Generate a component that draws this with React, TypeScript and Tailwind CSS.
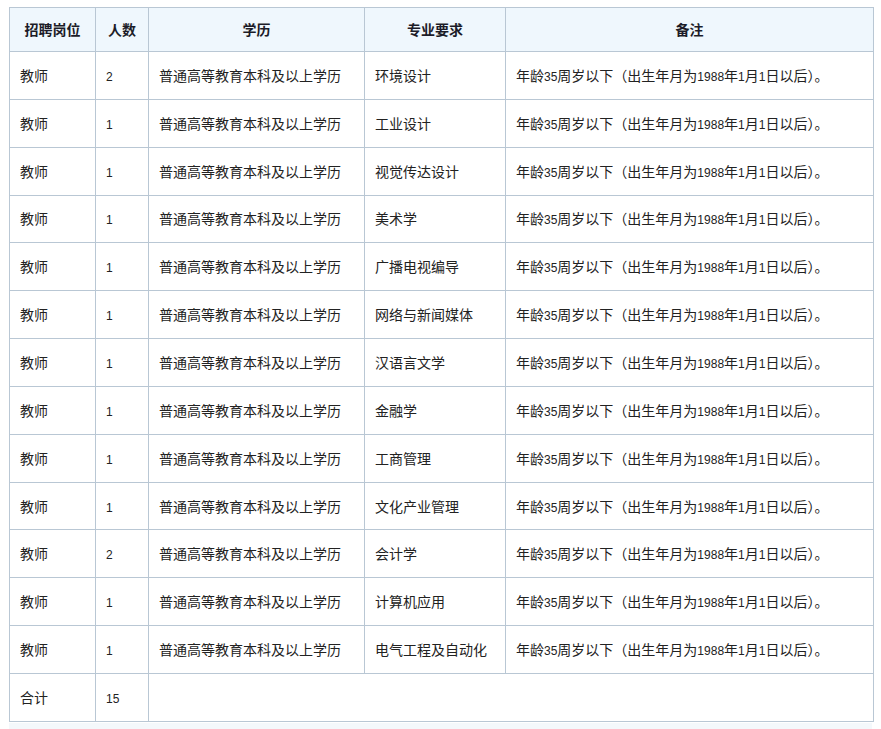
const majors: [number, string][] = [
  [2, "环境设计"],
  [1, "工业设计"],
  [1, "视觉传达设计"],
  [1, "美术学"],
  [1, "广播电视编导"],
  [1, "网络与新闻媒体"],
  [1, "汉语言文学"],
  [1, "金融学"],
  [1, "工商管理"],
  [1, "文化产业管理"],
  [2, "会计学"],
  [1, "计算机应用"],
  [1, "电气工程及自动化"],
]

const cell = "border border-[#b9c7d4] px-[10px] align-middle"

function Num({ children }: { children: React.ReactNode }) {
  return <span className="font-['Liberation_Sans',sans-serif] text-[12px]">{children}</span>
}

export default function App() {
  return (
    <div className="min-h-[729px] bg-white pl-[9px] pt-[7px] font-['Noto_Sans_CJK_SC',sans-serif] text-[14px] text-[#222]">
      <table className="w-[864px] table-fixed border-collapse">
        <colgroup>
          <col className="w-[86px]" />
          <col className="w-[53px]" />
          <col className="w-[216px]" />
          <col className="w-[141px]" />
          <col className="w-[368px]" />
        </colgroup>
        <thead>
          <tr className="h-[44px] bg-[#eff7fd] font-bold text-[#1c1c28]">
            <th className={cell + " text-center"}>招聘岗位</th>
            <th className={cell + " text-center"}>人数</th>
            <th className={cell + " text-center"}>学历</th>
            <th className={cell + " text-center"}>专业要求</th>
            <th className={cell + " text-center"}>备注</th>
          </tr>
        </thead>
        <tbody>
          {majors.map(([n, m], i) => (
            <tr key={i} className="h-[47.85px]">
              <td className={cell}>教师</td>
              <td className={cell}>
                <Num>{n}</Num>
              </td>
              <td className={cell}>普通高等教育本科及以上学历</td>
              <td className={cell}>{m}</td>
              <td className={cell}>
                年龄<Num>35</Num>周岁以下（出生年月为<Num>1988</Num>年<Num>1</Num>月<Num>1</Num>日以后）。
              </td>
            </tr>
          ))}
          <tr className="h-[47.85px]">
            <td className={cell}>合计</td>
            <td className={cell}>
              <Num>15</Num>
            </td>
            <td className={cell} colSpan={3}></td>
          </tr>
        </tbody>
      </table>
      <div className="mt-[1px] h-[8px] w-[863px] bg-[#f4f8fb]" />
    </div>
  )
}
